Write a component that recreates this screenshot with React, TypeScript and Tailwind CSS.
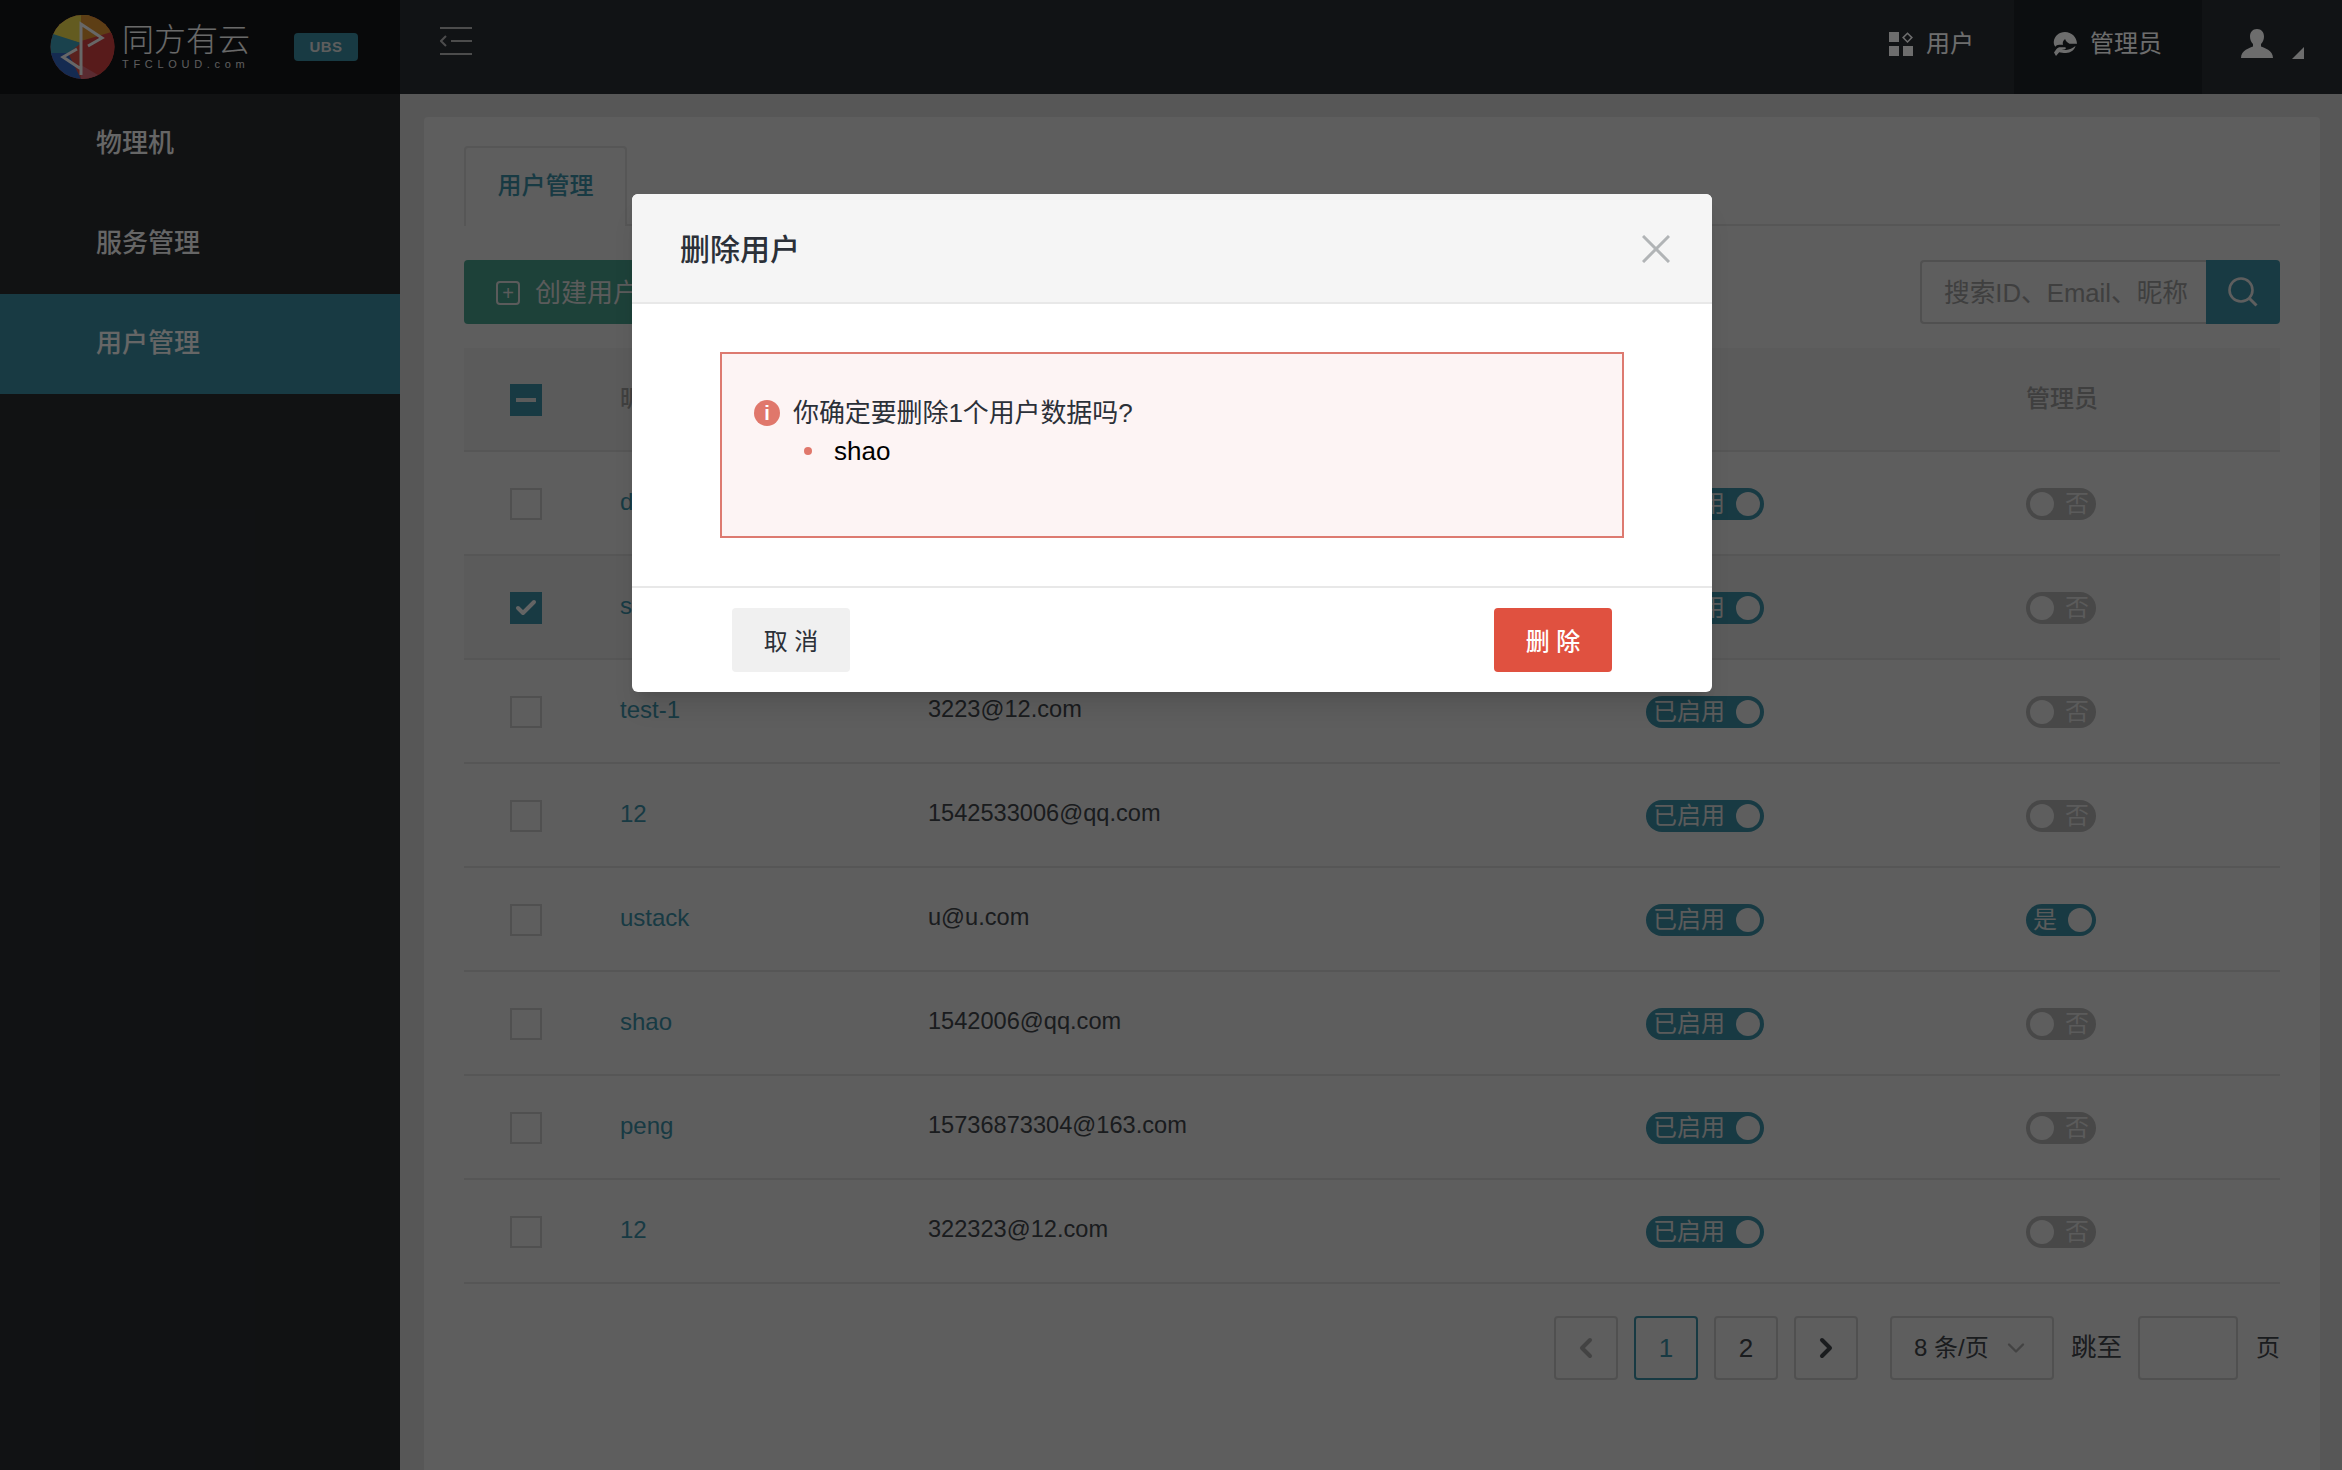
import React from 'react';
import { ChevronDown, ChevronLeft, ChevronRight, Check } from 'lucide-react';

const users = [
  { name: 'dev', email: 'dev@12.com', checked: false, admin: false },
  { name: 'shao', email: '1542006@163.com', checked: true, admin: false },
  { name: 'test-1', email: '3223@12.com', checked: false, admin: false },
  { name: '12', email: '1542533006@qq.com', checked: false, admin: false },
  { name: 'ustack', email: 'u@u.com', checked: false, admin: true },
  { name: 'shao', email: '1542006@qq.com', checked: false, admin: false },
  { name: 'peng', email: '15736873304@163.com', checked: false, admin: false },
  { name: '12', email: '322323@12.com', checked: false, admin: false },
];

function Logo() {
  return (
    <svg width="65" height="64" viewBox="0 0 65 64" className="shrink-0">
      <defs>
        <clipPath id="logo-clip">
          <circle cx="32.5" cy="32" r="32" />
        </clipPath>
      </defs>
      <g clipPath="url(#logo-clip)">
        <rect width="65" height="64" fill="#c84a44" />
        <polygon points="0,0 40,0 31,28 0,20" fill="#dccb48" />
        <polygon points="31,0 65,0 65,20 31,28" fill="#cf8a30" />
        <polygon points="31,26 65,16 65,64 31,64" fill="#c43c3c" />
        <polygon points="0,18 31,28 14,42 0,42" fill="#3a93ac" />
        <polygon points="0,38 18,38 31,64 0,64" fill="#2f5fb4" />
        <polygon points="31,50 55,64 31,64" fill="#c8606e" />
      </g>
      <path d="M31 60V9l21 14-14 8M27 34l-14 8 18 12" fill="none" stroke="#e4e4e4" strokeWidth="3" />
    </svg>
  );
}

function UsersIcon() {
  return (
    <svg width="24" height="24" viewBox="0 0 24 24" fill="#f2f2f2" className="shrink-0">
      <rect x="0" y="0" width="10" height="10" />
      <rect x="0" y="14" width="10" height="10" />
      <rect x="14" y="14" width="10" height="10" />
      <path d="M18.5 1.2l4.4 4.4-4.4 4.4-4.4-4.4z" fill="none" stroke="#f2f2f2" strokeWidth="1.5" />
    </svg>
  );
}

function AdminIcon() {
  return (
    <svg width="24" height="24" viewBox="0 0 24 24" fill="#f2f2f2" className="shrink-0">
      <path d="M12 0C6 0 1.5 4 .8 9.5c-.2 1.800.3 3.800 1.500 5.200.8-1.200 2.200-2 3.800-2h4c-1-1.800 0-4.200 2-5.700.6 2 2.200 3.700 4.400 4.700H24C23.700 5 18.500 0 12 0z" />
      <path d="M1 20.500l2.500-3.500c1-1.200 2.200-1.700 3.700-1.700h4.800c1 0 1.300 1.600 0 1.900l-3.500.5 4.500.4c3.500-.2 6.500-1.700 9.500-4-1 4-5 7-9.500 7-3 0-5-.8-6.800-.8L3 24z" />
    </svg>
  );
}

function SearchIcon() {
  return (
    <svg width="30" height="30" viewBox="0 0 30 30" fill="none" stroke="#d0d0d0" strokeWidth="2.6" className="shrink-0">
      <circle cx="13" cy="13" r="11.500" />
      <path d="M21.500 21.500l7 7" strokeWidth="3" />
    </svg>
  );
}

function Toggle({ on, label, width }: { on: boolean; label: string; width: string }) {
  return (
    <div
      className={`flex h-8 items-center justify-between rounded-full text-2xl leading-none text-[#cacaca] ${width} ${
        on ? 'bg-[#358296] pl-[7px] pr-1' : 'flex-row-reverse bg-[#a0a0a0] pl-1 pr-[7px]'
      }`}
    >
      <span>{label}</span>
      <span className="size-6 rounded-full bg-[#d0d0d0]" />
    </div>
  );
}

function Box({ checked }: { checked: boolean }) {
  if (checked) {
    return (
      <div className="flex size-8 items-center justify-center bg-[#358296] text-[#dedede]">
        <Check size={24} strokeWidth={4} />
      </div>
    );
  }
  return <div className="size-8 border-2 border-[#b2b2b2]" />;
}

function PageBtn({ children, active }: { children: React.ReactNode; active?: boolean }) {
  return (
    <button
      className={`flex h-16 w-16 items-center justify-center rounded border-2 text-[26px] ${
        active ? 'border-[#358296] text-[#358296]' : 'border-[#b2b2b2] text-[#3a3e44]'
      }`}
    >
      {children}
    </button>
  );
}

export default function App() {
  return (
    <div className="relative flex h-[1470px] w-full flex-col overflow-hidden bg-[#c2c2c2] font-['Liberation_Sans','Noto_Sans_CJK_SC',sans-serif]">
      {/* Top bar */}
      <header className="flex h-[94px] shrink-0 items-center bg-[#262a30] text-[#f2f2f2]">
        <div className="flex h-full w-[400px] shrink-0 items-center bg-[#131518] pl-[50px]">
          <Logo />
          <div className="ml-[7px] flex w-[130px] flex-col items-start pb-[3px]">
            <span className="text-[32px] leading-[38px] font-light text-[#e8e8e8]">同方有云</span>
            <span className="text-[11px] leading-[11px] tracking-[4.7px] whitespace-nowrap text-[#d0d0d0]">TFCLOUD.com</span>
          </div>
          <span className="ml-[42px] flex h-7 w-16 items-center justify-center rounded bg-[#358296] text-[15px] font-bold tracking-wide text-[#cfcfcf]">
            UBS
          </span>
        </div>
        <svg width="32" height="28" viewBox="0 0 32 28" fill="none" stroke="#a8a8a8" strokeWidth="2" className="mb-[12px] ml-10 shrink-0">
          <path d="M0 1h32M11 14h21M0 27h32M6 9l-5 5 5 5" />
        </svg>
        <div className="ml-auto flex h-full items-center text-2xl">
          <div className="flex items-center gap-[13px] pr-[40px] pb-[6px]">
            <UsersIcon />
            <span>用户</span>
          </div>
          <div className="flex h-full w-[188px] items-center gap-[13px] bg-[#1c1f24] pb-[6px] pl-[39px]">
            <AdminIcon />
            <span>管理员</span>
          </div>
          <div className="flex w-[140px] items-center pb-[7px] pl-[39px]">
            <svg width="32" height="29" viewBox="0 0 32 29" fill="#f2f2f2">
              <path d="M16 0c4.500 0 7 3.200 7 7.500 0 3-1.200 5.800-3 7.500v2.500c3 1.600 12 3.500 12 11.500H0c0-8 9-9.900 12-11.500V15c-1.800-1.700-3-4.500-3-7.500C9 3.200 11.500 0 16 0z" />
            </svg>
            <div className="mt-[18px] ml-[19px] size-0 border-b-[12px] border-l-[12px] border-b-[#f2f2f2] border-l-transparent" />
          </div>
        </div>
      </header>

      <div className="flex min-h-0 flex-1">
        {/* Side nav */}
        <aside className="w-[400px] shrink-0 bg-[#26282c] text-[26px] font-medium text-[#e2e2e2]">
          <div className="flex h-[100px] items-center pb-[2px] pl-[96px]">物理机</div>
          <div className="flex h-[100px] items-center pb-[2px] pl-[96px]">服务管理</div>
          <div className="flex h-[100px] items-center bg-[#358296] pb-[2px] pl-[96px]">用户管理</div>
        </aside>

        {/* Content */}
        <main className="min-w-0 flex-1 pt-[23px] pr-[22px] pl-6">
          <div className="h-full rounded-t bg-[#d0d0d0] px-10 pt-[29px]">
            <div className="flex h-[80px] border-b-2 border-[#bebebe]">
              <div className="-mb-[2px] flex w-[163px] items-center justify-center rounded-t border-x-2 border-t-2 border-[#bebebe] bg-[#d0d0d0] pb-[2px] text-2xl font-medium text-[#358296]">
                用户管理
              </div>
            </div>

            <div className="mt-[34px] flex h-16 items-center justify-between">
              <button className="flex h-16 w-[240px] items-center gap-[15px] rounded bg-[#42917f] pt-[2px] pl-8 text-[26px] text-[#cacaca]">
                <span className="flex size-6 items-center justify-center rounded-[4px] border-2 border-[#cacaca] text-xl leading-none">+</span>
                创建用户
              </button>
              <div className="flex h-16">
                <div className="flex w-[286px] items-center rounded-l border-2 border-r-0 border-[#b2b2b2] pt-[2px] pl-[22px] text-[25.7px] whitespace-nowrap text-[#8c8c8c]">
                  搜索ID、Email、昵称
                </div>
                <div className="flex w-[74px] items-center justify-center rounded-r bg-[#358296]">
                  <SearchIcon />
                </div>
              </div>
            </div>

            {/* User table */}
            <div className="mt-6 border-b-2 border-[#bebebe]">
              <div className="grid h-[102px] grid-cols-[156px_308px_718px_380px_1fr] items-center bg-[#c9c9c9] text-2xl font-medium text-[#8c8c8c]">
                <div className="pt-[2px] pl-[46px]">
                  <div className="flex size-8 items-center justify-center bg-[#358296]">
                    <div className="h-1 w-5 bg-[#cacaca]" />
                  </div>
                </div>
                <div>昵称</div>
                <div>Email</div>
                <div>状态</div>
                <div>管理员</div>
              </div>
              {users.map((u, i) => (
                <div
                  key={i}
                  className={`grid h-[104px] grid-cols-[156px_308px_718px_380px_1fr] items-center border-t-2 border-[#bebebe] pt-[2px] text-2xl ${
                    u.checked ? 'bg-[#c9c9c9]' : ''
                  }`}
                >
                  <div className="pl-[46px]">
                    <Box checked={u.checked} />
                  </div>
                  <div className="pb-[5px] text-[#358296]">{u.name}</div>
                  <div className="pb-[4px] text-[23.6px] text-[#3a3e44]">{u.email}</div>
                  <div>
                    <Toggle on label="已启用" width="w-[118px]" />
                  </div>
                  <div>
                    <Toggle on={u.admin} label={u.admin ? '是' : '否'} width="w-[70px]" />
                  </div>
                </div>
              ))}
            </div>

            {/* Pagination */}
            <div className="mt-[32px] flex items-center justify-end text-2xl text-[#3a3e44]">
              <div className="flex gap-4">
                <PageBtn>
                  <ChevronLeft size={32} strokeWidth={3} className="text-[#949494]" />
                </PageBtn>
                <PageBtn active>1</PageBtn>
                <PageBtn>2</PageBtn>
                <PageBtn>
                  <ChevronRight size={32} strokeWidth={3} />
                </PageBtn>
              </div>
              <div className="ml-8 flex h-16 w-[164px] items-center justify-between rounded border-2 border-[#b2b2b2] px-[22px]">
                <span className="whitespace-nowrap">8 条/页</span>
                <ChevronDown size={28} className="text-[#949494]" />
              </div>
              <span className="ml-[17px] text-[25.5px]">跳至</span>
              <div className="ml-4 h-16 w-[100px] rounded border-2 border-[#b2b2b2]" />
              <span className="ml-[18px]">页</span>
            </div>
          </div>
        </main>
      </div>

      {/* Dialog */}
      <div className="absolute inset-0 flex justify-center bg-black/55 pt-[194px] pl-[2px]">
        <div className="h-[498px] w-[1080px] overflow-hidden rounded-md bg-white shadow-xl">
          <div className="flex h-[110px] items-center justify-between border-b-2 border-[#e8e8e8] bg-[#f5f5f5] pr-[42px] pl-12">
            <span className="pt-[2px] text-[30px] font-medium text-[#2b3038]">删除用户</span>
            <svg width="28" height="28" viewBox="0 0 28 28" stroke="#b1b4b6" strokeWidth="3" className="mt-[2px]">
              <path d="M1 1l26 26M27 1L1 27" />
            </svg>
          </div>
          <div className="h-[284px] border-b-2 border-[#e8e8e8] px-[88px] pt-[48px]">
            <div className="h-[186px] border-2 border-[#dd7a70] bg-[#fdf4f4] pt-[39px] pl-8 text-[26px] leading-[40px]">
              <div className="flex items-center gap-[13px] text-[#2b3038]">
                <span className="flex size-[26px] items-center justify-center rounded-full bg-[#e0776b] text-[20px] leading-none font-bold text-white">i</span>
                <span className="tracking-[-0.1px]">你确定要删除1个用户数据吗?</span>
              </div>
              <div className="-mt-[2px] flex items-center text-black">
                <span className="ml-[50px] size-2 rounded-full bg-[#e0776b]" />
                <span className="ml-[22px]">shao</span>
              </div>
            </div>
          </div>
          <div className="flex justify-between pt-[20px] pr-[100px] pl-[100px]">
            <button className="h-16 w-[118px] rounded bg-[#f0f0f0] pt-[3px] text-2xl text-[#2b3038]">取 消</button>
            <button className="h-16 w-[118px] rounded bg-[#e05140] pt-[3px] text-2xl font-medium text-white">删 除</button>
          </div>
        </div>
      </div>
    </div>
  );
}
